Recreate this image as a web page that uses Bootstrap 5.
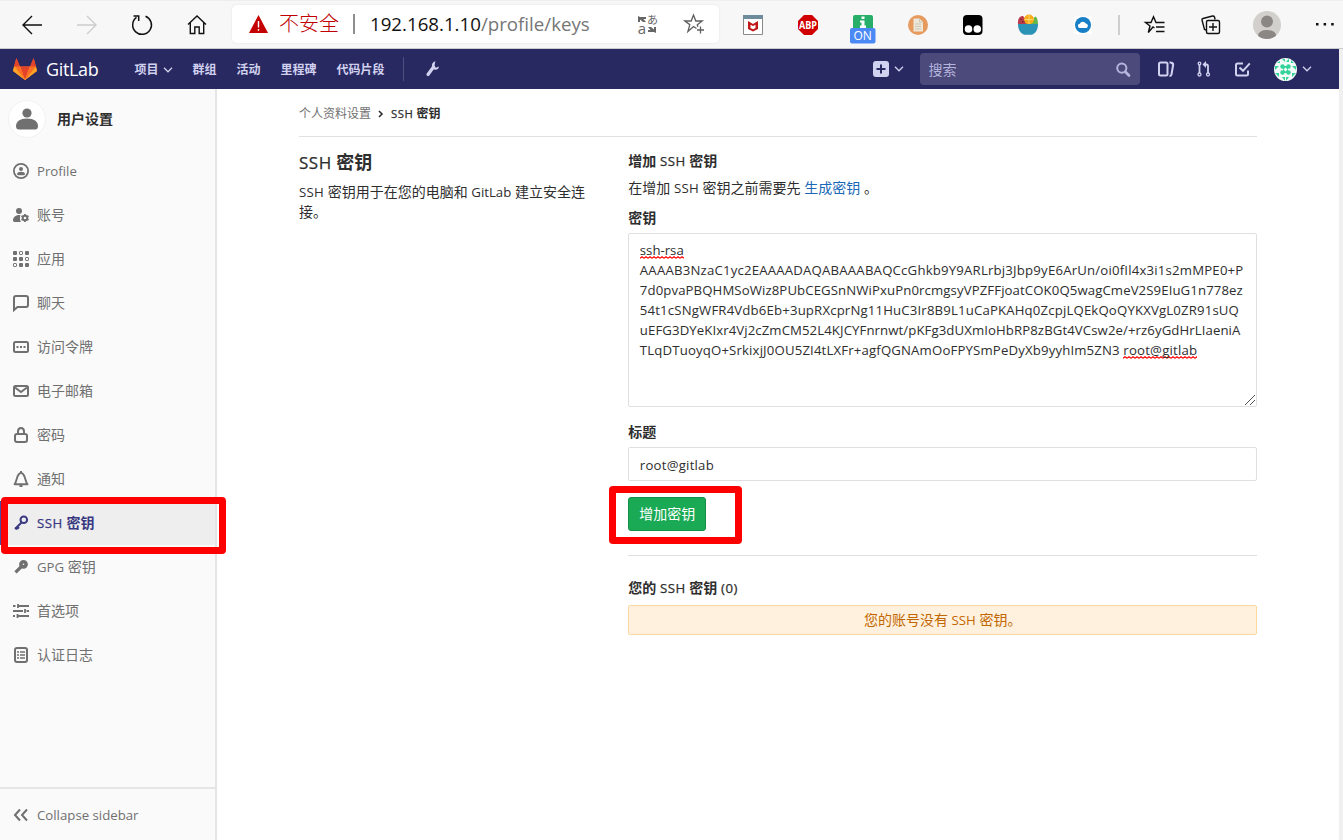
<!DOCTYPE html>
<html lang="zh-CN">
<head>
<meta charset="utf-8">
<title>SSH 密钥 · 用户设置 · GitLab</title>
<link href="https://cdn.jsdelivr.net/npm/bootstrap@5.3.0/dist/css/bootstrap.min.css" rel="stylesheet">
<style>
body{font-family:"Open Sans","Noto Sans CJK SC",sans-serif;font-size:14px;line-height:20px;color:#2e2e2e;height:840px;overflow:hidden;background:#fff}
svg{display:block;flex:none;overflow:visible}
.lat{font-size:.945em}
.cap{letter-spacing:.25px}
/* browser toolbar */
.chrome{height:49px;background:#f7f7f7;border-top:1px solid #eee;border-bottom:1px solid #cbcbcb;padding-left:4.5px}
.slot{width:55px;height:47px;display:flex;align-items:center;justify-content:center;flex:none}
.slot-wide{width:56px}
.slot-end{width:40px;justify-content:flex-end;padding-right:1px}
.address{width:487px;height:38px;margin-left:7.5px;margin-right:6.5px;background:#fff;border-radius:5px;box-shadow:0 0 3px rgba(0,0,0,.08);flex:none;font-size:20px;padding-left:17px;margin-top:-1px}
.unsafe{color:#c00000;margin-left:11px;font-weight:300}
.bar{width:2px;height:20px;background:#8e8e8e;margin:0 15px 0 14px}
.url{font-size:18.7px;color:#767676}
.url b{font-weight:400;color:#111}
.ico-translate{margin-right:26px}
.ico-star{margin-right:13px}
.ico-on{margin-top:8px}
.tool-sep{width:2px;height:20px;background:#cfcfcf;margin:0 7px 0 7.5px}
/* application navbar */
.nav-row{background:#f0f0f0}
.gl-nav{height:40px;width:1339px;background:#292961;color:#d1d1f0;font-size:12px;font-weight:700;padding-left:13px;flex:none}
.brand-name{font-size:18px;font-weight:400;color:#fff;margin-left:9px;width:88.5px;letter-spacing:-.35px}
.gl-nav .links{gap:20px;padding-top:2px}
.nav-sep{width:1px;height:24px;background:#4d4d80;margin:0 21px 0 18px}
.search{width:220px;height:32px;border-radius:4px;background:#4b4a7b;color:#b5b4dc;font-size:14px;font-weight:400;padding:2px 9px 0;margin:0 18px 0 16px}
.chev{margin-left:5px}
.gap-ic{margin-left:23.5px}
.chev-end{margin:0 27px 0 5px}
/* page */
.page{width:1343px;height:751px;border-right:4px solid #f0f0f0}
.side{width:217px;background:#fafafa;border-right:2px solid #e5e5e5;color:#707070;flex:none}
.ctx{padding:11px 0 0 8px;height:60px;color:#2e2e2e;font-weight:700}
.ctx span:last-child{padding-top:9px}
.ctx-av{width:38px;height:38px;border-radius:50%;background:#fff;border:1px solid #f2f2f2;margin-right:11px}
.item{height:44px;padding-left:13px;gap:8px}
.item.on{background:#eee;color:#393982;font-weight:700;box-shadow:inset 3px 0 0 #4b4ba3;position:relative}
.on .lat,h4 .lat,.hd .lat,.crumb .lat{font-weight:500;letter-spacing:.5px;-webkit-text-stroke:.25px currentColor}
.collapse-bar{height:53px;border-top:2px solid #e5e5e5;padding-left:13px;gap:8px}
.redbox{position:absolute;border:7px solid #f00;border-radius:4px;pointer-events:none;z-index:5}
.on .redbox{left:1px;top:-4px;width:225px;height:57px}
.act .redbox{left:-19px;top:-11px;width:133px;height:58px}
.main{width:958px;margin-left:82px}
.crumb{height:48px;border-bottom:1px solid #e1e1e1;font-size:12px;color:#707070;padding-top:2px}
.crumb svg{margin:0 7px}
.crumb b,.hd{color:#2e2e2e;font-weight:700}
.set{--bs-gutter-x:30px}
h4{font-size:18px;font-weight:700;line-height:24px;margin:13px 0 7px}
.hd{height:20px}
.hd-first{margin-top:14px}
.lead-in{margin-top:7px}
.hd-key{margin:10px 0 5px}
.hd-title{margin:15px 0 5px}
.form-control{border-color:#dfdfdf;border-radius:2px;color:#2e2e2e;font-size:13.2px;line-height:20px;padding:6px 10.500px}
.title-in{height:34px;padding-top:7px;letter-spacing:.22px}
.keybox{height:174px;white-space:nowrap;position:relative}
.keybox div{height:20px}
.keybox .grip{position:absolute;right:1px;bottom:1px}
.k1{letter-spacing:.192px}.k2{letter-spacing:.1px}.k3{letter-spacing:.158px}.k4{letter-spacing:.09px}.k5{letter-spacing:.155px}.k6{letter-spacing:.2px}
.wavy{display:inline-block;height:20px;background:url("data:image/svg+xml,%3Csvg xmlns='http://www.w3.org/2000/svg' width='4' height='3'%3E%3Cpath d='M0 2.300L2 .7L4 2.300' fill='none' stroke='%23f00' stroke-width='1.100'/%3E%3C/svg%3E") repeat-x 0 16px}
.act{margin-top:16px}
.btn-green,.btn-green:hover{background:#1aaa55;border:1px solid #168f48;color:#fff;font-size:14px;line-height:20px;padding:6px 10px;border-radius:3px;width:78px;height:34px}
.rule{border-top:1px solid #dfdfdf;margin-top:24px;height:23px}
.note{height:30px;border:1px solid #fdd7a0;background:#fff1de;color:#c26700;border-radius:2px;margin-top:7px}
a{color:#1b69b6;text-decoration:none}
</style>
<script src="https://cdn.jsdelivr.net/npm/bootstrap@5.3.0/dist/js/bootstrap.bundle.min.js"></script>
</head>
<body>
<header class="chrome d-flex align-items-center">
  <div class="slot"><svg width="20" height="18" fill="none" stroke="#111" stroke-width="1.4"><path d="M20 9H1M10 0 1 9l9 9"/></svg></div>
  <div class="slot"><svg width="20" height="18" fill="none" stroke="#cdcdcd" stroke-width="1.4"><path d="M0 9h19M10 0l9 9-9 9"/></svg></div>
  <div class="slot"><svg width="20" height="20" fill="none" stroke="#111" stroke-width="1.5"><path d="M13.5 1.2A9.4 9.4 0 1 1 4.5 2.400M1.500 1H6.700V6"/></svg></div>
  <div class="slot"><svg width="18" height="19" fill="none" stroke="#111" stroke-width="1.4"><path d="M0 9.500 9 .9l9 8.600M2.300 7.500v11h4.500v-6.500h4.400v6.500h4.500v-11"/></svg></div>
  <div class="address d-flex align-items-center">
    <svg width="19" height="18"><path d="M9.500 0 19 18H0z" fill="#c40000"/><path d="M9.500 6v6.500M9.500 14v1.800" stroke="#fff" stroke-width="1.400"/></svg>
    <span class="unsafe">不安全</span><i class="bar"></i><span class="url"><b>192.168.1.10</b>/profile/keys</span>
    <svg class="ico-translate ms-auto" width="20" height="20" fill="#666"><path d="M0 2l2 1h6v2H5.500L8 8H5L2 5.500V8H0zM18 19l-2-1h-6v-2h2.500L10 13h3l3 2.500V13h2z"/><text x="9" y="9.500" font-size="11" font-family="Noto Sans CJK JP">あ</text><text x="-.3" y="19.500" font-size="15">a</text></svg>
    <svg class="ico-star" width="22" height="20" fill="none" stroke="#5f5f5f" stroke-width="1.300"><path d="M12.500 14.500 9.500 12.500 3.900 17.500 5.800 10.600 .8 7h6.400L9.500 1l2.300 6h6.400l-4.900 3.700.6 2M16.500 12.500v7M13 16h7"/></svg>
  </div>
  <div class="slot"><svg width="20" height="20"><path d="M.5 1.500h19v18H.5z" fill="#fff" stroke="#8a8a8a"/><path d="M0 0h20v4H0z" fill="#6d8b9b"/><path d="M5 6l5 3 5-3v8l-5 2.500L5 14z" fill="#c01818"/><path d="M7.500 9.700 10 11l2.500-1.300v3.300L10 14.300 7.500 13z" fill="#fff"/></svg></div>
  <div class="slot"><svg width="20" height="20"><path d="M6 0h8l6 6v8l-6 6H6l-6-6V6z" fill="#d00000"/><text x="10" y="13.700" text-anchor="middle" font-size="9.800" font-weight="700" fill="#fff" textLength="18" lengthAdjust="spacingAndGlyphs">ABP</text></svg></div>
  <div class="slot"><svg class="ico-on" width="26" height="28"><rect x="3" width="20" height="20" rx="2" fill="#27ae68"/><path d="M11.500 1.500h3v2.500h-3zM10 5.500h4.500v5H16V13h-6v-2.500h1.500V7.500H10z" fill="#fff"/><rect y="13" width="25.500" height="15.500" rx="2" fill="#4b8af5"/><text x="12.700" y="25" text-anchor="middle" font-size="12" fill="#fff">ON</text></svg></div>
  <div class="slot"><svg width="20" height="20"><circle cx="10" cy="10" r="10" fill="#e79a5d"/><path d="M5.500 3.500h6l3.500 3.500v9.500H5.500z" fill="#ece7d8"/><path d="M11.500 3.500V7H15M7 9h6M7 11.500h6M7 14h6" stroke="#cdc8b8" fill="none"/></svg></div>
  <div class="slot"><svg width="20" height="20"><rect width="19.500" height="20" rx="4" fill="#000"/><circle cx="5.500" cy="14" r="3.800" fill="#fff"/><circle cx="14.300" cy="14" r="3.800" fill="#fff"/></svg></div>
  <div class="slot"><svg width="20" height="20"><path d="M0 9.500C-.5 3 2 1 5 1l7 9z" fill="#b93c4c"/><path d="M20 10C20 5 19 2 17 1.500L12 10z" fill="#62b84a"/><circle cx="11" cy="4.500" r="5" fill="#f6ac1d"/><path d="M11 0v9M6.500 4.500h9" stroke="#ffd76a"/><path d="M3 4v1M4 7h1M6 6v1" stroke="#5b1d28"/><path d="M0 9h20c0 6-2.500 9-6 10.800H6C2.500 18 0 15 0 9z" fill="#2b93b5"/></svg></div>
  <div class="slot"><svg width="18" height="18"><path d="M0 0h18v18H0z" fill="#fff"/><circle cx="9" cy="9" r="8" fill="#167fc7"/><path d="M5.500 12a2.200 2.200 0 0 1 .3-4.300 3.300 3.300 0 0 1 6-.1A2.300 2.300 0 0 1 12.500 12z" fill="#fff"/></svg></div>
  <i class="tool-sep"></i>
  <div class="slot slot-wide"><svg width="20" height="18" fill="none" stroke="#111" stroke-width="1.400"><path d="M9.500 12 8 11 3.300 16.500 5 10 .5 6.500H6L8.500.8 11 6.500h8.500M11 11h8.500M11 15.500h8.500"/></svg></div>
  <div class="slot slot-wide"><svg width="20" height="20" fill="none" stroke="#111" stroke-width="1.400"><rect x="5.500" y="5.500" width="13" height="13" rx="1.500"/><path d="M12 8v8M8 12h8M5 15 3.500 14.500 1 5Q.8 3.800 2 3.500L11.500 1q1.500-.2 2 1l.6 2.500"/></svg></div>
  <div class="slot slot-wide"><svg width="28" height="28"><circle cx="14" cy="14" r="14" fill="#d2d0cd"/><circle cx="14" cy="10.500" r="6" fill="#8b8785"/><path d="M5 24.700C5 17 23 17 23 24.700 18 29 10 29 5 24.700z" fill="#8b8785"/></svg></div>
  <div class="slot slot-end"><svg width="18" height="3"><path d="M0 0h2.500v2.500H0zM7.600 0h2.500v2.500H7.600zM15.200 0h2.500v2.500h-2.500z" fill="#111"/></svg></div>
</header>

<div class="nav-row d-flex">
<nav class="gl-nav d-flex align-items-center">
  <svg width="24" height="22" viewBox="0 0 24 22"><path d="M12 22 0 13 3.300 0l3.400 8.500h10.600L20.700 0 24 13z" fill="#fc6d26"/><path d="M12 22 7 8.500h10z" fill="#e24329"/><path d="M0 13 1 8.500h6L12 22zM24 13l-1-4.500h-6L12 22z" fill="#fca326"/><path d="M1 8.500h6L12 22 1.700 8.500zM23 8.500h-6L12 22z" fill="#fc6d26"/><path d="M1 8.500 3.500 0 7 8.500zM23 8.500 20.500 0 17 8.500z" fill="#e24329"/></svg>
  <span class="brand-name">GitLab</span>
  <div class="links d-flex align-items-center">
    <span class="d-flex align-items-center">项目<svg class="ms-1" width="10" height="6" fill="none" stroke="#d1d1f0" stroke-width="1.300"><path d="M1 .8l4 4 4-4"/></svg></span>
    <span>群组</span><span>活动</span><span>里程碑</span><span>代码片段</span>
  </div>
  <i class="nav-sep"></i>
  <svg width="16" height="16" viewBox="0 0 16 16"><path d="M3 13.500 8.500 6" stroke="#d1d1f0" stroke-width="3.200" stroke-linecap="round"/><path d="M10.300.2A4.300 4.300 0 0 0 7 5.500a4 4 0 0 0 3 3.300c2 .3 3.700-1 3.900-3.300l-3 1.200L9.500 5z" fill="#d1d1f0"/></svg>
  <svg class="ms-auto" width="16" height="16"><rect width="16" height="16" rx="3" fill="#d1d1f0"/><path d="M8 3.500v9M3.500 8h9" stroke="#292961" stroke-width="2"/></svg>
  <svg class="chev" width="10" height="6" fill="none" stroke="#d1d1f0" stroke-width="1.300"><path d="M1 .8l4 4 4-4"/></svg>
  <div class="search d-flex align-items-center justify-content-between">搜索<svg width="15" height="15" fill="none" stroke="#b5b4dc"><circle cx="5.800" cy="5.100" r="4.600" stroke-width="2"/><path d="M9.300 8.800 13 12.500" stroke-width="2.800" stroke-linecap="round"/></svg></div>
  <svg width="16" height="16" fill="none" stroke="#d1d1f0" stroke-width="2"><rect x="1" y="1.500" width="8.500" height="13" rx="1.500"/><path d="M11.500 1.500h1.300q1.200 0 1.200 1.200v.5M11.500 15q1.500 0 2-1.500L15.200 3.500q.2-1.200-1-1.500"/></svg>
  <svg class="gap-ic" width="14" height="16" fill="none" stroke="#d1d1f0"><circle cx="2.500" cy="2.500" r="1.300" stroke-width="1.300"/><circle cx="2.500" cy="13.500" r="1.500" stroke-width="1.300"/><circle cx="11" cy="13.500" r="1.500" stroke-width="1.300"/><path d="M2.500 4v8M11 12V5q0-1.500-1.500-1.500H8" stroke-width="1.800"/><path d="M9 0v7L5.500 3.500z" fill="#d1d1f0" stroke="none"/></svg>
  <svg class="gap-ic" width="16" height="16" fill="none" stroke="#d1d1f0" stroke-width="2"><path d="M8 2.500H2.500Q1 2.500 1 4v9q0 1.500 1.500 1.500h9Q13 14.500 13 13V9.500M4.500 6.500 8 9.800l6.800-7.500"/></svg>
  <svg class="gap-ic" width="23" height="23" viewBox="0 0 23 23"><circle cx="11.500" cy="11.500" r="11.500" fill="#f2fbf7"/><g fill="#34d39a"><circle cx="8.500" cy="8.500" r="2.200"/><circle cx="14.500" cy="8.500" r="2.200"/><circle cx="8.500" cy="14.500" r="2.200"/><circle cx="14.500" cy="14.500" r="2.200"/><path d="M9 8h5v7H9zM8 1l3 0v3zM12 4l3-3.500v3.500zM1 8l4 0-4 4zM22 8h-4l4 4zM1 15h4v4zM22 15h-4v4zM8 19h3v4zM12 19h3l-3 4zM3 5h3V3zM20 5h-3V2z"/></g><path d="M11.500 9.500l2 2-2 2-2-2z" fill="#fff"/></svg>
  <svg class="chev-end" width="10" height="6" fill="none" stroke="#d1d1f0" stroke-width="1.300"><path d="M1 .8l4 4 4-4"/></svg>
</nav>
</div>

<div class="page d-flex">
  <aside class="side d-flex flex-column">
    <div class="ctx d-flex"><span class="ctx-av d-flex align-items-center justify-content-center"><svg width="22" height="22" fill="#707070"><circle cx="11" cy="5" r="4.600"/><path d="M0 18c0-4.500 4-7.500 11-7.500s11 3 11 7.500q0 3.500-3 3.500H3Q0 21.500 0 18z"/></svg></span><span>用户设置</span></div>
    <div class="item d-flex align-items-center"><svg width="16" height="16"><circle cx="8" cy="8" r="7.100" fill="none" stroke="#707070" stroke-width="1.800"/><circle cx="8" cy="6" r="2" fill="#707070"/><path d="M4 11c0-3 8-3 8 0q0 1.300-2 1.300H6Q4 12.300 4 11z" fill="#707070"/></svg><span class="lat">Profile</span></div>
    <div class="item d-flex align-items-center"><svg width="16" height="16" fill="#707070"><circle cx="6" cy="4" r="3"/><path d="M0 13.500C0 10 2.500 8 7.500 8c-.8 2-.7 4.500.3 7H2q-2 0-2-1.500z"/><circle cx="12" cy="11" r="2.300" fill="none" stroke="#707070" stroke-width="2"/><path d="M12 7v1.500M12 13.500V15M8.500 9l1.400.8M14.100 12.200l1.400.8M8.500 13l1.400-.8M14.100 9.800l1.400-.8" stroke="#707070" stroke-width="1.800"/></svg>账号</div>
    <div class="item d-flex align-items-center"><svg width="16" height="16" fill="#707070"><rect width="4" height="4" rx="1"/><rect x="12" width="4" height="4" rx="1"/><rect y="6" width="4" height="4" rx="1"/><rect x="6" y="6" width="4" height="4" rx="1"/><rect x="6" y="12" width="4" height="4" rx="1"/><rect x="12" y="12" width="4" height="4" rx="1"/><g fill="none" stroke="#707070"><rect x="6.500" y=".5" width="3" height="3" rx=".6"/><rect x="12.500" y="6.500" width="3" height="3" rx=".6"/><rect x=".5" y="12.500" width="3" height="3" rx=".6"/></g></svg>应用</div>
    <div class="item d-flex align-items-center"><svg width="16" height="16" fill="none" stroke="#707070" stroke-width="2"><path d="M1 14.500V3q0-2 2-2h10q2 0 2 2v7q0 2-2 2H4.500L1 15z"/></svg>聊天</div>
    <div class="item d-flex align-items-center"><svg width="16" height="16" fill="none" stroke="#707070" stroke-width="2"><rect x="1" y="3" width="14" height="10" rx="1.500"/><path d="M3.500 8h2M7 8h2M10.500 8h2"/></svg>访问令牌</div>
    <div class="item d-flex align-items-center"><svg width="16" height="16" fill="none" stroke="#707070" stroke-width="2"><rect x="1" y="3" width="14" height="10" rx="1.500"/><path d="M2 4.500 8 9l6-4.500"/></svg>电子邮箱</div>
    <div class="item d-flex align-items-center"><svg width="16" height="16" fill="none" stroke="#707070" stroke-width="2"><rect x="2" y="7" width="12" height="8" rx="2"/><path d="M5 7V4.500Q5 1 8 1t3 3.500V7"/></svg>密码</div>
    <div class="item d-flex align-items-center"><svg width="16" height="16" fill="none" stroke="#707070" stroke-width="1.900"><path d="M1.500 13.200h13C12 11 12.500 2 8 2S4 11 1.500 13.200z" stroke-linejoin="round"/><path d="M8 0v2M6.500 15h3"/></svg>通知</div>
    <div class="item on d-flex align-items-center"><svg width="16" height="16" fill="none" stroke="#393982" stroke-width="2"><circle cx="10.800" cy="4.800" r="3.300"/><path d="M8.500 7.500 2 14M4 11.500l2 2M2.500 12l1.800 2.500"/></svg><span><span class="lat">SSH</span> 密钥</span><span class="redbox"></span></div>
    <div class="item d-flex align-items-center"><svg width="16" height="16" fill="none" stroke="#707070"><circle cx="10.500" cy="5.300" r="2.600" stroke-width="3.600"/><path d="M9.500 6.500 2.500 13.300" stroke-width="3.200"/></svg><span><span class="lat">GPG</span> 密钥</span></div>
    <div class="item d-flex align-items-center"><svg width="16" height="16" fill="none" stroke="#707070" stroke-width="1.800"><path d="M0 3h2.500M5 3h11M0 8h10M13.500 8H16M0 13h2M4.500 13H16M5 1v4M12 6v4M4.500 11v4"/></svg>首选项</div>
    <div class="item d-flex align-items-center"><svg width="16" height="16" fill="none" stroke="#707070" stroke-width="2"><rect x="2" y="1" width="12" height="14" rx="2"/><path d="M4 5h2M7 5h5M4 8h2M7 8h5M4 11h2M7 11h5" stroke-width="1.500"/></svg>认证日志</div>
    <div class="collapse-bar d-flex align-items-center mt-auto"><svg width="16" height="16" fill="none" stroke="#707070" stroke-width="2"><path d="M7 2.500 2 8l5 5.500M14 2.500 9 8l5 5.500"/></svg><span class="lat">Collapse sidebar</span></div>
  </aside>
  <main class="main">
    <div class="crumb d-flex align-items-center">个人资料设置<svg width="6" height="8" fill="none" stroke="#2e2e2e" stroke-width="1.600"><path d="M1 1l3 3-3 3"/></svg><b><span class="lat">SSH</span> 密钥</b></div>
    <div class="row set">
      <div class="col-4">
        <h4><span class="lat">SSH</span> 密钥</h4>
        <p class="m-0"><span class="lat cap">SSH</span> 密钥用于在您的电脑和 <span class="lat">GitLab</span> 建立安全连接。</p>
      </div>
      <div class="col-8">
        <div class="hd hd-first">增加 <span class="lat">SSH</span> 密钥</div>
        <div class="lead-in">在增加 <span class="lat cap">SSH</span> 密钥之前需要先 <a href="#">生成密钥</a> 。</div>
        <div class="hd hd-key">密钥</div>
        <div class="form-control keybox">
          <div><span class="wavy">ssh-rsa</span></div>
          <div class="k1">AAAAB3NzaC1yc2EAAAADAQABAAABAQCcGhkb9Y9ARLrbj3Jbp9yE6ArUn/oi0fIl4x3i1s2mMPE0+P</div>
          <div class="k2">7d0pvaPBQHMSoWiz8PUbCEGSnNWiPxuPn0rcmgsyVPZFFjoatCOK0Q5wagCmeV2S9EIuG1n778ez</div>
          <div class="k3">54t1cSNgWFR4Vdb6Eb+3upRXcprNg11HuC3Ir8B9L1uCaPKAHq0ZcpjLQEkQoQYKXVgL0ZR91sUQ</div>
          <div class="k4">uEFG3DYeKIxr4Vj2cZmCM52L4KJCYFnrnwt/pKFg3dUXmIoHbRP8zBGt4VCsw2e/+rz6yGdHrLIaeniA</div>
          <div class="k5">TLqDTuoyqO+SrkixjJ0OU5ZI4tLXFr+agfQGNAmOoFPYSmPeDyXb9yyhIm5ZN3 <span class="wavy k6">root@gitlab</span></div>
          <svg class="grip" width="10" height="10" stroke="#555" stroke-width="1"><path d="M0 10 10 0M5 10l5-5"/></svg>
        </div>
        <div class="hd hd-title">标题</div>
        <div class="form-control title-in">root@gitlab</div>
        <div class="act position-relative d-flex"><button class="btn btn-green">增加密钥</button><span class="redbox"></span></div>
        <div class="rule"></div>
        <div class="hd">您的 <span class="lat">SSH</span> 密钥 <span class="lat">(0)</span></div>
        <div class="note d-flex align-items-center justify-content-center"><span>您的账号没有 <span class="lat">SSH</span> 密钥。</span></div>
      </div>
    </div>
  </main>
</div>
</body>
</html>
